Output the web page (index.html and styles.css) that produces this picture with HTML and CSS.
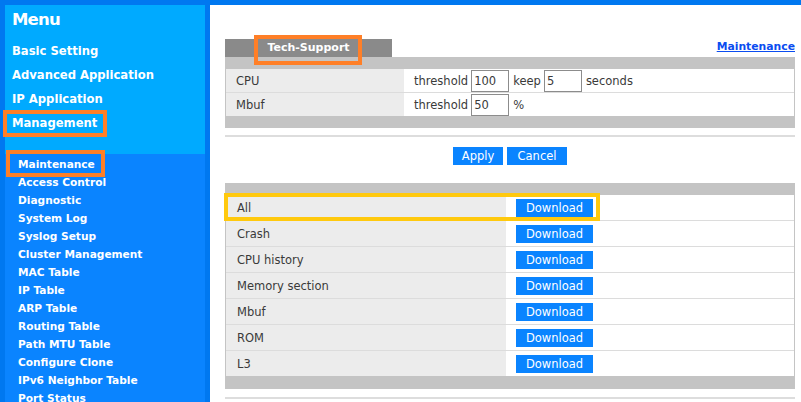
FILE: index.html
```html
<!DOCTYPE html>
<html lang="en">
<head>
<meta charset="utf-8">
<title>Tech-Support</title>
<link rel="stylesheet" href="styles.css">
</head>
<body>
<div class="frame">
  <aside class="sidebar">
    <div class="menu-panel">
      <div class="menu-title">Menu</div>
      <ul class="menu-list">
        <li>Basic Setting</li>
        <li>Advanced Application</li>
        <li>IP Application</li>
        <li class="hl hl-mgmt">Management</li>
      </ul>
    </div>
    <ul class="submenu">
      <li class="hl hl-maint">Maintenance</li>
      <li>Access Control</li>
      <li>Diagnostic</li>
      <li>System Log</li>
      <li>Syslog Setup</li>
      <li>Cluster Management</li>
      <li>MAC Table</li>
      <li>IP Table</li>
      <li>ARP Table</li>
      <li>Routing Table</li>
      <li>Path MTU Table</li>
      <li>Configure Clone</li>
      <li>IPv6 Neighbor Table</li>
      <li>Port Status</li>
    </ul>
  </aside>
  <main class="content">
    <div class="tab-row">
      <div class="tab hl-tab"><span class="tab-label">Tech-Support</span></div>
      <a class="crumb" href="#">Maintenance</a>
    </div>

    <div class="panel">
      <div class="bar"></div>
      <div class="rows">
        <div class="row">
          <div class="cell-label">CPU</div>
          <div class="cell-value">
            <span>threshold</span><input class="num" value="100"><span>keep</span><input class="num" value="5"><span>seconds</span>
          </div>
        </div>
        <div class="row">
          <div class="cell-label">Mbuf</div>
          <div class="cell-value">
            <span>threshold</span><input class="num" value="50"><span>%</span>
          </div>
        </div>
      </div>
      <div class="bar"></div>
    </div>

    <div class="sep"></div>

    <div class="actions">
      <button class="btn btn-apply">Apply</button>
      <button class="btn btn-cancel">Cancel</button>
    </div>

    <div class="panel downloads">
      <div class="bar"></div>
      <div class="rows">
        <div class="row hl-all"><div class="cell-label">All</div><div class="cell-value"><button class="btn btn-dl">Download</button></div></div>
        <div class="row"><div class="cell-label">Crash</div><div class="cell-value"><button class="btn btn-dl">Download</button></div></div>
        <div class="row"><div class="cell-label">CPU history</div><div class="cell-value"><button class="btn btn-dl">Download</button></div></div>
        <div class="row"><div class="cell-label">Memory section</div><div class="cell-value"><button class="btn btn-dl">Download</button></div></div>
        <div class="row"><div class="cell-label">Mbuf</div><div class="cell-value"><button class="btn btn-dl">Download</button></div></div>
        <div class="row"><div class="cell-label">ROM</div><div class="cell-value"><button class="btn btn-dl">Download</button></div></div>
        <div class="row"><div class="cell-label">L3</div><div class="cell-value"><button class="btn btn-dl">Download</button></div></div>
      </div>
      <div class="bar bar-bottom"></div>
    </div>

    <div class="sep sep-bottom"></div>
  </main>
</div>
</body>
</html>
```

FILE: styles.css
```css
*, *::before, *::after { box-sizing: border-box; }

html, body {
  margin: 0;
  padding: 0;
  height: 402px;
  overflow: hidden;
  background: #0078f0;
  font-family: "DejaVu Sans", "Liberation Sans", sans-serif;
}

.frame {
  display: flex;
  gap: 5px;
  padding: 5px 0 0 5px;
  height: 402px;
}

/* ---------- sidebar ---------- */
.sidebar {
  width: 200px;
  flex: none;
  background: #0a84ff;
  color: #fff;
}

.menu-panel {
  height: 149px;
  background: #00aaff;
  padding: 2px 0 0 7px;
}

.menu-title {
  font-weight: bold;
  font-size: 16.5px;
  letter-spacing: -0.8px;
  line-height: 26px;
  margin-bottom: 6px;
}

.menu-list,
.submenu {
  list-style: none;
  margin: 0;
  padding: 0;
}

.menu-list li {
  font-weight: bold;
  font-size: 11.6px;
  line-height: 24px;
  white-space: nowrap;
}

.submenu {
  padding: 1px 0 0 13px;
}

.submenu li {
  font-weight: bold;
  font-size: 10.6px;
  line-height: 18px;
  white-space: nowrap;
}

/* annotation outlines */
.hl { position: relative; }

.hl::after,
.hl-tab::after,
.hl-all::after {
  content: "";
  position: absolute;
  border: 4px solid #ff7f27;
  pointer-events: none;
  z-index: 2;
}

.hl-mgmt::after {
  left: -9px;
  top: -1px;
  width: 104px;
  height: 27px;
}

.hl-maint::after {
  left: -12px;
  top: -5px;
  width: 99px;
  height: 27px;
}

/* ---------- content ---------- */
.content {
  flex: 1;
  background: #fff;
  padding: 0 6px 0 15px;
  color: #3a3a3a;
  font-size: 11.5px;
}

.tab-row {
  display: flex;
  align-items: flex-end;
  margin-top: 34px;
  height: 18px;
}

.tab {
  position: relative;
  width: 167px;
  height: 18px;
  background: #8a8a8a;
  text-align: center;
}

.tab-label {
  color: #fff;
  font-weight: bold;
  font-size: 11px;
  line-height: 18px;
}

.hl-tab::after {
  left: 29px;
  top: -4px;
  width: 108px;
  height: 30px;
}

.crumb {
  margin-left: auto;
  color: #0a4cf0;
  font-weight: bold;
  font-size: 10.8px;
  line-height: 14px;
  margin-bottom: 3px;
  text-decoration: underline;
}

.panel .bar {
  height: 12px;
  background: #c4c4c4;
}

.panel .bar-bottom { height: 13px; }

.rows {
  border-left: 1px solid #c4c4c4;
  border-right: 1px solid #c4c4c4;
}

.row {
  display: flex;
  height: 24px;
  border-bottom: 1px solid #dcdcdc;
}

.row:last-child {
  height: 23px;
  border-bottom: none;
}

.cell-label {
  width: 178px;
  flex: none;
  background: #ececec;
  padding-left: 10px;
  display: flex;
  align-items: center;
}

.cell-value {
  flex: 1;
  display: flex;
  align-items: center;
  padding-left: 10px;
  white-space: nowrap;
}

.num {
  width: 38px;
  height: 22px;
  border: 1px solid #8c8c8c;
  padding: 0 2px;
  margin: 0 4px 0 3px;
  font-family: inherit;
  font-size: 11.5px;
  color: #3a3a3a;
  background: #fff;
  outline: none;
}

.sep {
  height: 2px;
  background: #dddddd;
  margin-top: 7px;
}

.actions {
  display: flex;
  justify-content: center;
  gap: 4px;
  margin-top: 10px;
}

.btn {
  height: 18px;
  border: none;
  padding: 0;
  background: #0a84ff;
  color: #fff;
  font-family: inherit;
  font-size: 11.5px;
  line-height: 18px;
  cursor: pointer;
}

.btn-apply { width: 50px; }
.btn-cancel { width: 60px; }

.downloads { margin-top: 18px; }

.downloads .row {
  height: 26px;
}

.downloads .row:last-child {
  height: 25px;
}

.downloads .cell-label {
  width: 280px;
  padding-left: 11px;
}

.downloads .cell-value {
  padding-left: 10px;
  align-items: flex-start;
  padding-top: 4px;
}

.btn-dl { width: 77px; }

.hl-all { position: relative; }

.hl-all::after {
  border-color: #ffc90e;
  left: -2px;
  top: -2px;
  width: 376px;
  height: 28px;
}

.sep-bottom { margin-top: 8px; }
```
